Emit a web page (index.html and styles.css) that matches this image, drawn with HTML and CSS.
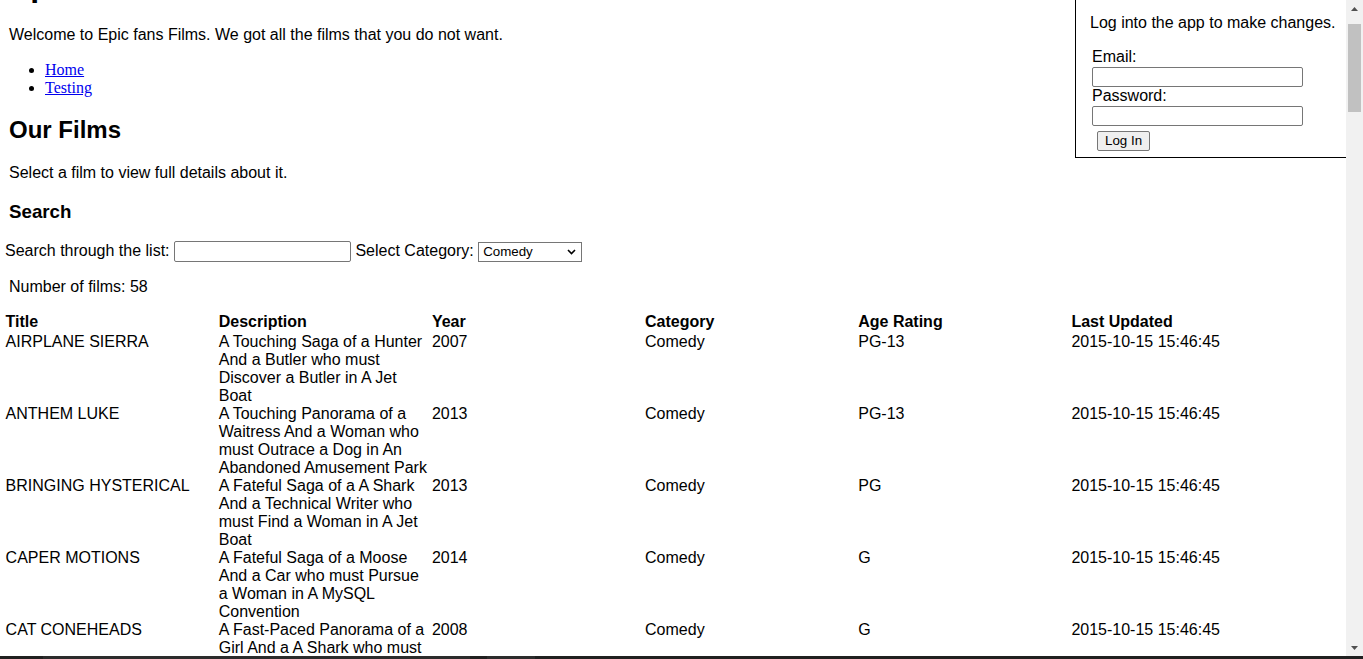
FILE: index.html
```html
<!DOCTYPE html>
<html lang="en">
<head>
<meta charset="utf-8">
<title>Epic fans Films</title>
<link rel="stylesheet" href="styles.css">
</head>
<body>
<div class="screen">
  <div class="window">
    <div class="viewport">
      <div class="page">
        <h1 class="title">Epic fans Films</h1>
        <p class="text">Welcome to Epic fans Films. We got all the films that you do not want.</p>
        <ul class="nav">
          <li><a href="#">Home</a></li>
          <li><a href="#">Testing</a></li>
        </ul>
        <h2 class="heading">Our Films</h2>
        <p class="text">Select a film to view full details about it.</p>
        <h3 class="subheading">Search</h3>
        <div class="search">Search through the list: <input class="search-input" type="text"> Select Category: <span class="select-wrap"><select class="select"><option>Comedy</option><option>Action</option><option>Drama</option></select><svg class="chevron" width="9" height="6" viewBox="0 0 9 6"><path d="M1 1 L4.5 4.5 L8 1" fill="none" stroke="#000" stroke-width="1.6"/></svg></span></div>
        <p class="text">Number of films: 58</p>
        <table class="films">
          <thead>
            <tr><th>Title</th><th>Description</th><th>Year</th><th>Category</th><th>Age Rating</th><th>Last Updated</th></tr>
          </thead>
          <tbody>
            <tr><td>AIRPLANE SIERRA</td><td>A Touching Saga of a Hunter And a Butler who must Discover a Butler in A Jet Boat</td><td>2007</td><td>Comedy</td><td>PG-13</td><td>2015-10-15 15:46:45</td></tr>
            <tr><td>ANTHEM LUKE</td><td>A Touching Panorama of a Waitress And a Woman who must Outrace a Dog in An Abandoned Amusement Park</td><td>2013</td><td>Comedy</td><td>PG-13</td><td>2015-10-15 15:46:45</td></tr>
            <tr><td>BRINGING HYSTERICAL</td><td>A Fateful Saga of a A Shark And a Technical Writer who must Find a Woman in A Jet Boat</td><td>2013</td><td>Comedy</td><td>PG</td><td>2015-10-15 15:46:45</td></tr>
            <tr><td>CAPER MOTIONS</td><td>A Fateful Saga of a Moose And a Car who must Pursue a Woman in A MySQL Convention</td><td>2014</td><td>Comedy</td><td>G</td><td>2015-10-15 15:46:45</td></tr>
            <tr><td>CAT CONEHEADS</td><td>A Fast-Paced Panorama of a Girl And a A Shark who must Confront a Boy in Ancient India</td><td>2008</td><td>Comedy</td><td>G</td><td>2015-10-15 15:46:45</td></tr>
            <tr><td>CLOSER BANG</td><td>A Unbelieveable Panorama of a Frisbee And a Hunter who must Vanquish a Monkey in Ancient India</td><td>2015</td><td>Comedy</td><td>R</td><td>2015-10-15 15:46:45</td></tr>
          </tbody>
        </table>
      </div>
      <aside class="login">
        <p class="login-msg">Log into the app to make changes.</p>
        <form class="login-form">
          <label class="login-label" for="email">Email:</label>
          <input class="login-field" id="email" type="text">
          <label class="login-label" for="password">Password:</label>
          <input class="login-field" id="password" type="password">
          <button class="login-btn" type="button">Log In</button>
        </form>
      </aside>
    </div>
    <div class="scrollbar">
      <div class="sb-btn"><svg width="7" height="4" viewBox="0 0 7 4"><path d="M0 4 L3.5 0 L7 4 Z" fill="#505050"/></svg></div>
      <div class="sb-track"><div class="sb-thumb"></div></div>
      <div class="sb-btn"><svg width="7" height="4" viewBox="0 0 7 4"><path d="M0 0 L3.5 4 L7 0 Z" fill="#505050"/></svg></div>
    </div>
  </div>
  <div class="taskbar"><span class="tb-seg tb-a"></span><span class="tb-seg tb-b"></span></div>
</div>
</body>
</html>
```

FILE: styles.css
```css
html, body {
  margin: 0;
  padding: 0;
}

body {
  font-family: "Liberation Sans", Arial, sans-serif;
  font-size: 16px;
  color: #000;
  background: #fff;
}

.screen {
  display: flex;
  flex-direction: column;
  height: 659px;
  overflow: hidden;
}

.window {
  display: flex;
  height: 656px;
}

.viewport {
  flex: 1;
  position: relative;
  overflow: hidden;
}

.page {
  margin-top: -62px;
  padding: 8px 0 0 5px;
}

.title {
  font-size: 32px;
  font-weight: bold;
  margin: 21.44px 0;
  padding-left: 4px;
}

.text {
  margin: 16px 0;
  padding-left: 4px;
}

.nav {
  margin: 16px 0;
  padding: 1px 0 0 40px;
  font-family: "Liberation Serif", "Times New Roman", serif;
}

.nav li {
  line-height: 18px;
}

.nav a {
  color: #0000ee;
  text-decoration: underline;
}

.heading {
  font-size: 24px;
  margin: 19px 0 19.92px;
  padding-left: 4px;
}

.subheading {
  font-size: 18.72px;
  margin: 18.72px 0;
  padding-left: 4px;
}

.search-input {
  box-sizing: border-box;
  width: 177px;
  height: 21px;
  padding: 1px 2px;
  border: 1px solid #767676;
  border-radius: 2px;
  font-family: "Liberation Sans", Arial, sans-serif;
  font-size: 13.33px;
  vertical-align: baseline;
}

.select-wrap {
  position: relative;
  display: inline-block;
}

.select {
  -webkit-appearance: none;
  appearance: none;
  box-sizing: border-box;
  width: 104px;
  height: 20px;
  padding: 0 0 0 4px;
  border: 1px solid #767676;
  border-radius: 0;
  background: #fff;
  color: #000;
  font-family: "Liberation Sans", Arial, sans-serif;
  font-size: 13.33px;
}

.chevron {
  position: absolute;
  right: 6px;
  top: 7px;
  pointer-events: none;
}

.films {
  width: 1279px;
  table-layout: fixed;
  border-collapse: collapse;
}

.films th {
  text-align: left;
  font-weight: bold;
  padding: 1px 0 2px 0.6px;
  line-height: 18px;
}

.films td {
  padding: 0 0 0 0.6px;
  line-height: 18px;
  vertical-align: top;
}

.login {
  position: absolute;
  left: 1075px;
  top: -2px;
  width: 300px;
  border: 1px solid #000;
  padding: 15px 0 6px 14px;
  background: #fff;
}

.login-msg {
  margin: 0 0 16px;
  line-height: 18px;
}

.login-form {
  padding-left: 2px;
}

.login-label {
  display: block;
  line-height: 18px;
}

.login-field {
  display: block;
  box-sizing: border-box;
  width: 211px;
  height: 20px;
  margin: 1px 0 0;
  padding: 1px 2px;
  border: 1px solid #767676;
  border-radius: 2px;
  font-family: "Liberation Sans", Arial, sans-serif;
  font-size: 13.33px;
}

.login-btn {
  display: block;
  box-sizing: border-box;
  height: 20px;
  margin: 5px 0 0 5px;
  padding: 1px 7px;
  border: 1px solid #767676;
  border-radius: 2px;
  background: #efefef;
  color: #000;
  font-family: "Liberation Sans", Arial, sans-serif;
  font-size: 13.33px;
  line-height: 16px;
}

.scrollbar {
  width: 17px;
  background: #f1f1f1;
  display: flex;
  flex-direction: column;
}

.sb-btn {
  height: 17px;
  display: flex;
  align-items: center;
  justify-content: center;
}

.sb-track {
  flex: 1;
  padding-top: 7px;
  display: flex;
  flex-direction: column;
  align-items: center;
}

.sb-thumb {
  width: 13px;
  height: 88px;
  background: #c1c1c1;
}

.taskbar {
  height: 3px;
  background: #202020;
  display: flex;
}

.tb-seg {
  display: block;
  height: 3px;
}

.tb-a {
  margin-left: 43px;
  width: 427px;
  background: #2c2c2c;
}

.tb-b {
  margin-left: 17px;
  width: 48px;
  background: #2c2c2c;
}
```
